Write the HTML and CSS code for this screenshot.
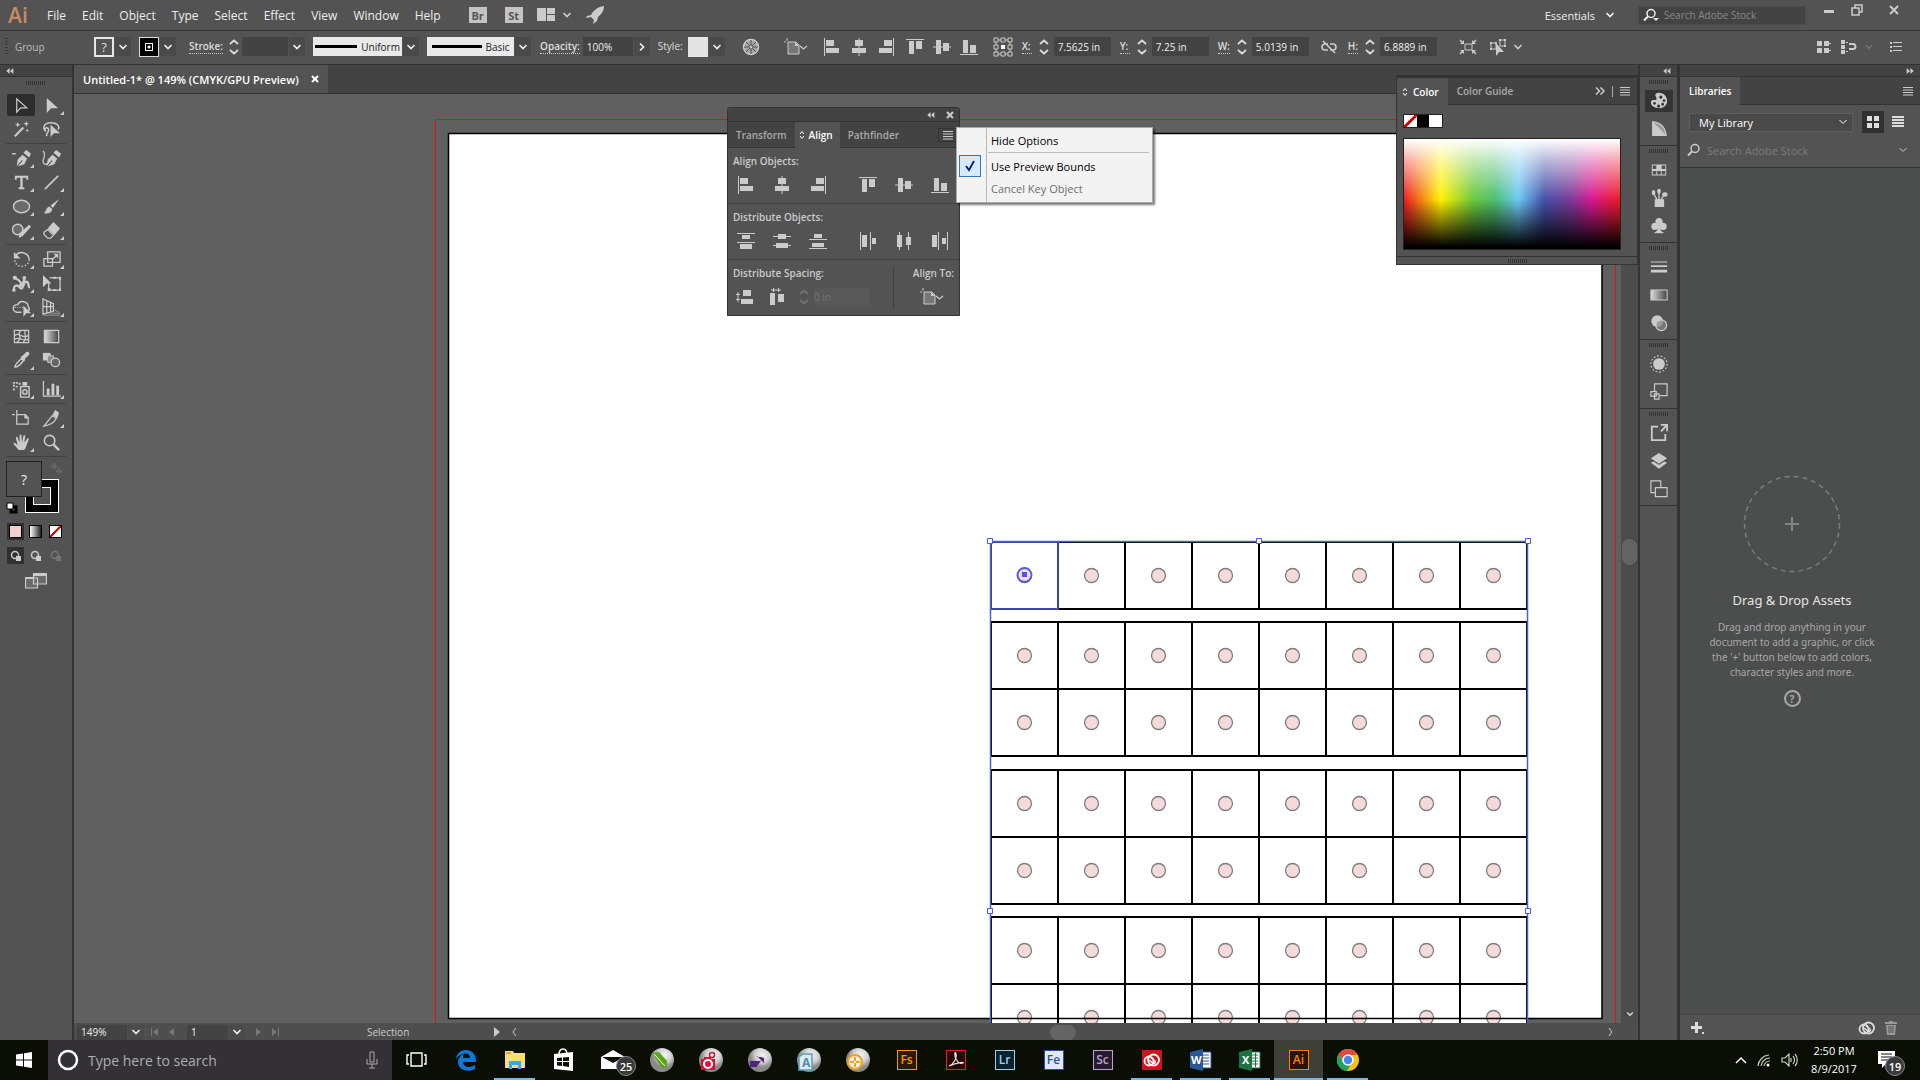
FILE: index.html
```html
<!DOCTYPE html>
<html lang="en">
<head>
<meta charset="utf-8">
<title>Untitled-1* @ 149% (CMYK/GPU Preview)</title>
<link rel="stylesheet" href="styles.css">
</head>
<body>
<svg class="sprite" aria-hidden="true">
  <defs>
    <linearGradient id="fade"><stop offset="0" stop-color="#ddd"/><stop offset="1" stop-color="#444"/></linearGradient>
    <symbol id="chev" viewBox="0 0 10 10"><path d="M1.500 3 5 6.500 8.500 3" fill="none" stroke="currentColor" stroke-width="1.700"/></symbol>
    <symbol id="chev-thin" viewBox="0 0 10 10"><path d="M1.500 3 5 6.500 8.500 3" fill="none" stroke="currentColor"/></symbol>
    <symbol id="chev-r" viewBox="0 0 10 10"><path d="M3 1.500 6.500 5 3 8.500" fill="none" stroke="currentColor" stroke-width="1.700"/></symbol>
    <symbol id="step" viewBox="0 0 12 18"><path d="M2 6 6 2.500 10 6M2 12 6 15.500 10 12" fill="none" stroke="currentColor" stroke-width="1.700"/></symbol>
    <symbol id="tiny-step" viewBox="0 0 6 10"><path d="M1 4 3 1.500 5 4M1 6 3 8.500 5 6" fill="none" stroke="currentColor"/></symbol>
    <symbol id="dbl-l" viewBox="0 0 10 8"><path d="M4.500 0v8L0 4ZM9.500 0v8L5 4Z"/></symbol>
    <symbol id="dbl-r" viewBox="0 0 10 8"><path d="M.5 0v8L5 4ZM5.500 0v8L10 4Z"/></symbol>
    <symbol id="dbl-o" viewBox="0 0 10 8"><path d="M1 .5 4.500 4 1 7.500M5.500 .5 9 4 5.500 7.500" fill="none" stroke="currentColor" stroke-width="1.500"/></symbol>
    <symbol id="burger" viewBox="0 0 10 10"><path d="M0 1h10v1H0zM0 3.500h10v1H0zM0 6h10v1H0zM0 8.500h10v1H0z"/></symbol>
    <symbol id="x" viewBox="0 0 10 10"><path d="M2 2 8 8M8 2 2 8" stroke="currentColor" stroke-width="2"/></symbol>
    <symbol id="lens" viewBox="0 0 14 14"><circle cx="8" cy="5.500" r="4" fill="none" stroke="currentColor" stroke-width="1.500"/><path d="M5 8.500 1 12.500" stroke="currentColor" stroke-width="2"/></symbol>

    <symbol id="al-l" viewBox="0 0 18 18"><path d="M1 0h1v18H1zM3 2h8v6H3zM3 10h13v5H3z"/></symbol>
    <symbol id="al-c" viewBox="0 0 18 18"><path d="M8.500 0h1v18h-1zM5 2h8v6H5zM2 10h14v5H2z"/></symbol>
    <symbol id="al-r" viewBox="0 0 18 18"><path d="M16 0h1v18h-1zM7 2h8v6H7zM2 10h13v5H2z"/></symbol>
    <symbol id="al-t" viewBox="0 0 18 18"><path d="M0 1h18v1H0zM3 3h5v13H3zM10 3h6v8h-6z"/></symbol>
    <symbol id="al-m" viewBox="0 0 18 18"><path d="M0 8.500h18v1H0zM3 2h5v14H3zM10 5h6v8h-6z"/></symbol>
    <symbol id="al-b" viewBox="0 0 18 18"><path d="M0 16h18v1H0zM3 2h5v13H3zM10 7h6v8h-6z"/></symbol>
    <symbol id="di-t" viewBox="0 0 18 18"><path d="M0 1h18v1H0zM5 3h8v4H5zM0 10h18v1H0zM3 12h12v5H3z"/></symbol>
    <symbol id="di-m" viewBox="0 0 18 18"><path d="M0 4h18v1H0zM5 2h8v5H5zM0 13h18v1H0zM3 11h12v5H3z"/></symbol>
    <symbol id="di-b" viewBox="0 0 18 18"><path d="M0 7h18v1H0zM5 2h8v4H5zM0 16h18v1H0zM3 11h12v4H3z"/></symbol>
    <symbol id="di-l" viewBox="0 0 18 18"><path d="M1 0h1v18H1zM3 3h5v12H3zM11 0h1v18h-1zM13 6h4v6h-4z"/></symbol>
    <symbol id="di-c" viewBox="0 0 18 18"><path d="M4 0h1v18H4zM2 3h5v12H2zM13 0h1v18h-1zM11 5h5v8h-5z"/></symbol>
    <symbol id="di-r" viewBox="0 0 18 18"><path d="M7 0h1v18H7zM1 3h5v12H1zM16 0h1v18h-1zM11 6h4v6h-4z"/></symbol>
    <symbol id="sp-v" viewBox="0 0 18 18"><path d="M7 2h8v6H7zM5 11h12v5H5zM0 6h4v1H0zM0 11h4v1H0zM1.500 4h1v10h-1z"/></symbol>
    <symbol id="sp-h" viewBox="0 0 18 18"><path d="M3 5h5v12H3zM11 6h6v8h-6zM6 0h1v4H6zM11 0h1v4h-1zM4 1.500h10v1H4z"/></symbol>
    <symbol id="doc" viewBox="0 0 26 18"><path d="M4 0v3M1 4h2" stroke="currentColor"/><path d="M5 4h8l3 3v9H5Z" fill="#777" stroke="currentColor"/><path d="M12 4v4h4Z"/><path d="M17 8 20.500 11 24 8" fill="none" stroke="currentColor" stroke-width="1.300"/></symbol>
    <symbol id="wheel" viewBox="0 0 18 18"><circle cx="9" cy="9" r="7.500" fill="#a5a5a5" stroke="currentColor" stroke-width="1.500"/><path d="M9 2v14M2 9h14M4 4l10 10M14 4 4 14" stroke="#555"/><circle cx="9" cy="9" r="2" fill="currentColor" stroke="#555"/></symbol>
    <symbol id="refpt" viewBox="0 0 20 20"><path d="M3 3h14v14H3Z" fill="none" stroke="currentColor"/><path d="M1 1h4v4H1zM8 1h4v4H8zM15 1h4v4h-4zM1 8h4v4H1zM15 8h4v4h-4zM1 15h4v4H1zM8 15h4v4H8zM15 15h4v4h-4z" fill="#535353" stroke="currentColor"/><path d="M8 8h4v4H8z" fill="#fff"/></symbol>
    <symbol id="unlink" viewBox="0 0 18 18"><path d="M8 6H5a3 3 0 0 0 0 6h3M10 6h3a3 3 0 0 1 0 6h-3M3 3 15 15" fill="none" stroke="currentColor" stroke-width="1.600"/></symbol>
    <symbol id="isolate" viewBox="0 0 18 18"><path d="M6 6h7v6H6Z" fill="none" stroke="currentColor"/><path d="m1 2 3 3M17 2l-3 3M1 16l3-3M17 16l-3-3" stroke="currentColor" stroke-width="1.500"/><path d="M5 2v4H1zM13 2v4h4zM5 16v-4H1zM13 16v-4h4z"/></symbol>
    <symbol id="simsel" viewBox="0 0 18 18"><path d="M2 5h5v6H2ZM11 2h5v6h-5Z" fill="none" stroke="currentColor"/><path d="M1 4h2v2H1zM6 4h2v2H6zM1 10h2v2H1zM10 1h2v2h-2zM15 1h2v2h-2zM15 7h2v2h-2zM7 5v13l3-4h5Z"/></symbol>
    <symbol id="four" viewBox="0 0 14 14"><path d="M0 1h5v5H0zM7 1h5v5H7zM0 8h5v5H0zM7 8h5v5H7zM12 3h2v1h-2zM12 10h2v1h-2z"/></symbol>
    <symbol id="snap" viewBox="0 0 16 14"><path d="M0 0h4v4H0zM0 5h4v4H0zM0 10h4v4H0zM5 2h2v1H5zM5 11h2v1H5z"/><path d="M8 4h4a2.500 2.500 0 0 1 0 5H8" fill="none" stroke="currentColor" stroke-width="2"/></symbol>
    <symbol id="list" viewBox="0 0 12 12"><path d="M0 1h2v2H0zM0 5h2v2H0zM0 9h2v2H0zM3 1h9v1H3zM3 5h9v1H3zM3 9h9v1H3z"/></symbol>
    <symbol id="arrange" viewBox="0 0 18 14"><path d="M0 0h9v13H0zM10 0h8v6h-8zM10 7h8v6h-8z"/></symbol>
    <symbol id="rocket" viewBox="0 0 20 18"><path d="M18 0C11 1 7 5 5 9L1 10 0 12l5-1 3 3-1 4 4-3 1-4c4-3 6-7 6-11Z"/></symbol>

    <symbol id="t-sel" viewBox="0 0 20 20"><path d="M5 3v14l4-4.500h6.500Z" fill="none" stroke="currentColor" stroke-width="1.300"/></symbol>
    <symbol id="t-dir" viewBox="0 0 20 20"><path d="M5 2v16l4.500-5H17Z"/></symbol>
    <symbol id="t-wand" viewBox="0 0 20 20"><path d="M3 17 12 8" stroke="currentColor" stroke-width="2.200"/><path d="m6 2 .8 2.200L9 5l-2.200.8L6 8l-.8-2.200L3 5l2.200-.8ZM15 1l.8 2.200L18 4l-2.200.8L15 7l-.8-2.200L12 4l2.200-.8ZM16 9l.5 1.500 1.500.5-1.500.5L16 13l-.5-1.500L14 11l1.500-.5Z"/></symbol>
    <symbol id="t-lasso" viewBox="0 0 20 20"><path d="M4 12C0 9 2 3 9 3c7 0 10 3 8 7M4 12a2 2 0 1 1 3-2c0 4-3 3-2 7" fill="none" stroke="currentColor" stroke-width="1.600"/><path d="M9 5v13l3.500-4H19Z"/></symbol>
    <symbol id="nib" viewBox="0 0 20 20"><path d="M5 18 6 11l5-5 5 4-3 6-7 2.500 5-6-.5-1ZM12 4l3-3 5 4-2 4Z"/></symbol>
    <symbol id="t-pen" viewBox="0 0 20 20"><use href="#nib"/><path d="M-1 5h5" stroke="currentColor" stroke-width="1.500"/></symbol>
    <symbol id="t-curve" viewBox="0 0 20 20"><use href="#nib"/><path d="M1 2c4 4 0 8 0 11s3 4 5 2" fill="none" stroke="currentColor" stroke-width="1.300"/></symbol>
    <symbol id="t-type" viewBox="0 0 20 20"><path d="M3 3h14v4h-2V5h-3.800v10H13v2H7v-2h1.800V5H5v2H3Z"/></symbol>
    <symbol id="t-line" viewBox="0 0 20 20"><path d="M3 17 17 3" stroke="currentColor" stroke-width="1.800"/></symbol>
    <symbol id="t-oval" viewBox="0 0 20 20"><ellipse cx="10" cy="10" rx="8.500" ry="6.500" fill="#6b6b6b" stroke="currentColor" stroke-width="1.500"/></symbol>
    <symbol id="t-brush" viewBox="0 0 20 20"><path d="M18 2 9 9l2.500 2.500ZM8 10l3 3c-1 4-5 5-9 4 2-1 2-6 6-7Z"/></symbol>
    <symbol id="t-shaper" viewBox="0 0 20 20"><circle cx="6" cy="9" r="5.500" fill="#6b6b6b" stroke="currentColor" stroke-width="1.500"/><path d="m7 18 1-5L18 4l2 2-9 10Z"/></symbol>
    <symbol id="t-erase" viewBox="0 0 20 20"><path d="m6 8 6-7 7 7-6 7Z"/><path d="m6 9 6 6-3 3H6l-4-4v-2Z" fill="none" stroke="currentColor" stroke-width="1.300"/></symbol>
    <symbol id="t-rot" viewBox="0 0 20 20"><path d="M4 6c4-6 14-3 14 4" fill="none" stroke="currentColor" stroke-width="1.600"/><path d="M18 10c0 9-14 10-15 1" fill="none" stroke="currentColor" stroke-width="1.500" stroke-dasharray="1.500 2"/><path d="M2 2v7h7Z"/></symbol>
    <symbol id="t-scale" viewBox="0 0 20 20"><path d="M6 2h13v11H6ZM2 9h9v8H2Z" fill="none" stroke="currentColor" stroke-width="1.400"/><path d="m11 10 4-4" stroke="currentColor" stroke-width="1.400"/><path d="M12 4h5v5Z"/></symbol>
    <symbol id="t-warp" viewBox="0 0 20 20"><path d="M2 17C2 10 6 12 8 14c4 5 4-7 7-6 4 1 1 6 4 6M4 5c6 2 5 5 6 8M13 5c-1 6-3 6-6 8" fill="none" stroke="currentColor" stroke-width="2.400"/><circle cx="3" cy="4" r="2.200"/><circle cx="13" cy="4" r="2"/><circle cx="2" cy="17" r="1.800"/></symbol>
    <symbol id="t-free" viewBox="0 0 20 20"><path d="M8 4h11v13H7V9" fill="none" stroke="currentColor" stroke-width="1.300"/><path d="M1 1v13l4-4h5Z"/><path d="M18 3h3v3h-3zM18 15h3v3h-3zM6 15h3v3H6zM12 3h3v2h-3zM12 16h3v2h-3z"/></symbol>
    <symbol id="t-shape" viewBox="0 0 20 20"><path d="M10 15H5c-5-1-5-8 1-8 2-5 11-4 11 2 2 2 1 4 0 5" fill="none" stroke="currentColor" stroke-width="1.500"/><path d="M3 10h9" stroke="currentColor" stroke-dasharray="1 1.500"/><path d="M12 8v12l3-4h5Z"/></symbol>
    <symbol id="t-persp" viewBox="0 0 20 20"><path d="M1 1v16l11-3V6ZM1 9h11M5 3v13M9 5v10" fill="none" stroke="currentColor" stroke-width="1.300"/><path d="M1 18h18M8 16h11M12 12l6 3" stroke="#999"/></symbol>
    <symbol id="t-mesh" viewBox="0 0 20 20"><path d="M2.500 3.500h15v13h-15Z" fill="none" stroke="currentColor" stroke-width="1.300"/><path d="M3 9c5-5 8 5 14 0M5 16c8-5-1-8 4-12M12 16c5-6 0-8 2-12M3 13c4-4 8 3 14 0" fill="none" stroke="currentColor" stroke-width="1.300"/></symbol>
    <symbol id="t-grad" viewBox="0 0 20 20"><path d="M2.500 3.500h15v13h-15Z" fill="url(#fade)" stroke="currentColor" stroke-width="1.300"/></symbol>
    <symbol id="t-drop" viewBox="0 0 20 20"><path d="M3 17c0-3 5-7 7-9l2 2c-2 3-6 7-9 7Z" fill="none" stroke="currentColor" stroke-width="1.500"/><path d="m9 6 2-1 4-4c3-1 4 2 3 3l-4 4-1 3Z"/></symbol>
    <symbol id="t-blend" viewBox="0 0 20 20"><path d="M1 2h8v8H1z"/><path d="M6 5h6v7H6Z" fill="#888" stroke="currentColor"/><circle cx="14" cy="12" r="4.500" fill="#666" stroke="currentColor" stroke-width="1.400"/></symbol>
    <symbol id="t-spray" viewBox="0 0 20 20"><path d="M9 7h9v11H9Z" fill="none" stroke="currentColor" stroke-width="1.500"/><circle cx="13.500" cy="12.500" r="2.300" fill="none" stroke="currentColor" stroke-width="1.500"/><path d="M11 2h5v4h-5zM1 2h2v2H1zM4 2h2v2H4zM7 3h2v2H7zM1 5h2v2H1zM4 6h2v2H4zM1 9h2v2H1z"/></symbol>
    <symbol id="t-graph" viewBox="0 0 20 20"><path d="M1.500 1v16H20" fill="none" stroke="currentColor" stroke-width="1.300"/><path d="M5 9h3v7H5zM10 4h3v12h-3zM15 6h3v10h-3z"/></symbol>
    <symbol id="t-art" viewBox="0 0 20 20"><path d="M5 1v4M0 6h3M5 6h9l3 3v7H5Z" fill="none" stroke="currentColor" stroke-width="1.300"/><path d="M13 5v5h5Z"/></symbol>
    <symbol id="t-slice" viewBox="0 0 20 20"><path d="M2 18 11 7l4 3c-2 4-7 7-13 8Z" fill="none" stroke="currentColor" stroke-width="1.400"/><path d="m11 6 3-5 4 3-2 6Z"/></symbol>
    <symbol id="t-hand" viewBox="0 0 20 20"><path d="m7 18-5-6c-1-2 1-2 2-1l2 2L4 5c0-1 2-2 2 0l2 5V3c0-2 2-2 2 0l.5 7L12 3c0-1 2-1 2 .5L13 10l3-4c1-1 2 0 1.500 1L15 14c-1 3-2 4-3 4Z"/></symbol>
    <symbol id="t-zoom" viewBox="0 0 20 20"><circle cx="8" cy="8" r="5.500" fill="none" stroke="currentColor" stroke-width="1.600"/><path d="m12 12 6 6" stroke="currentColor" stroke-width="2.500"/></symbol>
    <symbol id="draw-mode" viewBox="0 0 12 12"><circle cx="5" cy="5" r="3.500" fill="none" stroke="currentColor" stroke-width="1.500"/><path d="M6 6h5v5H6z"/></symbol>
    <symbol id="screen-mode" viewBox="0 0 22 16"><path d="M.5 5h12v10H.5ZM8.500 1h13v10h-13Z" fill="#6b6b6b" stroke="currentColor" stroke-width="1.200"/><path d="M0 4h8v2H0zM8 0h14v3H8z"/></symbol>

    <symbol id="d-pal" viewBox="0 0 20 20"><path fill-rule="evenodd" d="M8 1c7-1 11 4 11 9s-4 8-9 8S1 15 1 12s2-3 4-3 3-1 2-3-2-4 1-5Zm4 3a1.800 1.800 0 1 0 .1 0Zm3.500 4a1.600 1.600 0 1 0 .1 0ZM5 11a1.600 1.600 0 1 0 .1 0Zm4.500 3a1.700 1.700 0 1 0 .1 0Zm4.500-2a1.600 1.600 0 1 0 .1 0Z"/></symbol>
    <symbol id="d-guide" viewBox="0 0 20 20"><path d="M3 2c8 0 14 6 15 15H3Z" fill="#999" stroke="currentColor" stroke-width="1.300"/><path d="M3 2v15h15Z"/></symbol>
    <symbol id="d-sw" viewBox="0 0 20 20"><path fill-rule="evenodd" d="M2 4h16v12H2ZM3 5v4h4V5Zm10 0v4h4V5ZM3 11v4h4v-4Zm5 0v4h4v-4Zm5 0v4h4v-4Z"/></symbol>
    <symbol id="d-brush" viewBox="0 0 20 20"><path d="M6 12h9v8H6zM8 12 4 5M10 12V3M12 12l4-6" stroke="currentColor" stroke-width="1.500"/><ellipse cx="4" cy="4" rx="2" ry="3"/><ellipse cx="10" cy="2.500" rx="2" ry="3"/><ellipse cx="16.500" cy="6" rx="3" ry="2.500"/></symbol>
    <symbol id="d-club" viewBox="0 0 20 20"><circle cx="10" cy="5" r="4"/><circle cx="5.500" cy="10.500" r="4"/><circle cx="14.500" cy="10.500" r="4"/><path d="M9 8h2c0 6 1 8 4 9v1H5v-1c3-1 4-3 4-9Z"/></symbol>
    <symbol id="d-stroke" viewBox="0 0 20 20"><path d="M1 4h18v1H1zM1 8h18v2H1zM1 13h18v3H1z"/></symbol>
    <symbol id="d-grad" viewBox="0 0 20 20"><path d="M1 4.500h18v11H1Z" fill="url(#fade)" stroke="currentColor" stroke-width="1.200"/></symbol>
    <symbol id="d-trans" viewBox="0 0 20 20"><circle cx="8" cy="8" r="6.500"/><circle cx="12.500" cy="12.500" r="6" fill="#888" fill-opacity=".7" stroke="currentColor" stroke-width="1.300"/></symbol>
    <symbol id="d-app" viewBox="0 0 20 20"><circle cx="10" cy="10" r="6.500"/><circle cx="10" cy="10" r="9" fill="none" stroke="currentColor" stroke-width="1.200" stroke-dasharray="2 2"/></symbol>
    <symbol id="d-style" viewBox="0 0 20 20"><path d="M5 9V1h14v13h-8M1 9.500h6v5H1ZM5 12h5v6H5Z" fill="none" stroke="currentColor" stroke-width="1.300"/></symbol>
    <symbol id="d-export" viewBox="0 0 20 20"><path d="M9 3H2v15h15v-7" fill="none" stroke="currentColor" stroke-width="2"/><path d="M12 0h8v8h-2V3.500L13 9 11.500 7.500l5-5.500H12Z"/></symbol>
    <symbol id="d-layer" viewBox="0 0 20 20"><path d="m10 1 9 6-9 6-9-6ZM1 12l3-1.500 6 4 6-4 3 1.500-9 6.500Z"/></symbol>
    <symbol id="d-art" viewBox="0 0 20 20"><path d="M6 14H1V1h11v7M6 8.500h13v10H6Z" fill="none" stroke="currentColor" stroke-width="1.300"/></symbol>
    <symbol id="cc" viewBox="0 0 18 14"><circle cx="6" cy="8" r="4.500" fill="none" stroke="currentColor" stroke-width="1.800"/><circle cx="10.500" cy="7" r="5.500" fill="none" stroke="currentColor" stroke-width="1.800"/><path d="m6 7 4 3c2 1 3-1 2-2L8 5" fill="none" stroke="currentColor" stroke-width="1.500"/></symbol>
    <radialGradient id="ball" cx=".6" cy=".3"><stop offset="0" stop-color="#f4f4f4"/><stop offset=".6" stop-color="#d0d0d0"/><stop offset="1" stop-color="#8a8a8a"/></radialGradient>
    <g id="row8">
      <path d="M0 0H536V67H0ZM67 0V67M134 0V67M201 0V67M268 0V67M335 0V67M402 0V67M469 0V67" fill="none" stroke="#000" stroke-width="2"/>
      <g fill="#f4dada" stroke="#7d7d7d" stroke-width="1.300"><circle cx="33.500" cy="33.500" r="7"/><circle cx="100.500" cy="33.500" r="7"/><circle cx="167.500" cy="33.500" r="7"/><circle cx="234.500" cy="33.500" r="7"/><circle cx="301.500" cy="33.500" r="7"/><circle cx="368.500" cy="33.500" r="7"/><circle cx="435.500" cy="33.500" r="7"/><circle cx="502.500" cy="33.500" r="7"/></g>
    </g>
  </defs>
</svg>

<header class="menubar">
  <span class="logo">Ai</span>
  <nav class="menus">
    <button>File</button><button>Edit</button><button>Object</button><button>Type</button><button>Select</button><button>Effect</button><button>View</button><button>Window</button><button>Help</button>
  </nav>
  <div class="launch">
    <button class="badge-app">Br</button><button class="badge-app">St</button>
    <button class="arr" aria-label="Arrange documents"><svg width="18" height="14"><use href="#arrange"/></svg><svg width="10" height="10"><use href="#chev"/></svg></button>
    <button aria-label="GPU performance"><svg width="20" height="18"><use href="#rocket"/></svg></button>
  </div>
  <div class="window-side">
    <button class="essentials">Essentials <svg width="10" height="10"><use href="#chev"/></svg></button>
    <label class="stock"><svg width="16" height="14"><use href="#lens" width="14" height="14"/><path d="M10 10h6l-3 3Z"/></svg><input type="search" aria-label="Search Adobe Stock" placeholder="Search Adobe Stock"></label>
    <div class="win-buttons">
      <button aria-label="Minimize"><svg width="12" height="12"><path d="M1 6h10v3H1z"/></svg></button>
      <button aria-label="Restore"><svg width="12" height="12"><path d="M4 4V1h7v7H8M1 4h7v7H1Z" fill="none" stroke="currentColor" stroke-width="1.500"/></svg></button>
      <button class="close" aria-label="Close"><svg width="12" height="12"><path d="m2 2 8 8M10 2 2 10" stroke="currentColor" stroke-width="2"/></svg></button>
    </div>
  </div>
</header>

<section class="control">
  <span class="grip-v"></span><span class="kind">Group</span>
  <button class="swatch unknown">?</button><button class="drop" aria-label="Fill"><svg width="10" height="10"><use href="#chev"/></svg></button>
  <button class="swatch black" aria-label="Stroke colour"><i></i></button><button class="drop" aria-label="Stroke swatches"><svg width="10" height="10"><use href="#chev"/></svg></button>
  <label class="lab stroke-lab" for="stroke">Stroke:</label>
  <svg class="stepper" width="12" height="18"><use href="#step"/></svg><input id="stroke" class="field short"><button class="drop" aria-label="Stroke weights"><svg width="10" height="10"><use href="#chev"/></svg></button>
  <button class="profile"><i></i>Uniform</button><button class="drop" aria-label="Width profile"><svg width="10" height="10"><use href="#chev"/></svg></button>
  <button class="profile basic"><i></i>Basic</button><button class="drop" aria-label="Brush"><svg width="10" height="10"><use href="#chev"/></svg></button>
  <label class="lab opacity-lab" for="opacity">Opacity:</label><input id="opacity" class="field mid" value="100%"><button class="drop" aria-label="Opacity slider"><svg width="10" height="10"><use href="#chev-r"/></svg></button>
  <span class="lab plain">Style:</span><button class="swatch style" aria-label="Graphic style"></button><button class="drop" aria-label="Graphic styles"><svg width="10" height="10"><use href="#chev"/></svg></button>
  <button class="ic wheel" aria-label="Recolor"><svg width="18" height="18"><use href="#wheel"/></svg></button>
  <button class="ic align-to" aria-label="Align to"><svg width="26" height="18"><use href="#doc"/></svg></button>
  <div class="aligns">
    <button aria-label="Align left"><svg width="18" height="18"><use href="#al-l"/></svg></button><button aria-label="Align center"><svg width="18" height="18"><use href="#al-c"/></svg></button><button aria-label="Align right"><svg width="18" height="18"><use href="#al-r"/></svg></button><button class="second" aria-label="Align top"><svg width="18" height="18"><use href="#al-t"/></svg></button><button aria-label="Align middle"><svg width="18" height="18"><use href="#al-m"/></svg></button><button aria-label="Align bottom"><svg width="18" height="18"><use href="#al-b"/></svg></button>
  </div>
  <svg class="ref" width="20" height="20"><use href="#refpt"/></svg>
  <div class="coord"><label class="lab" for="cx">X:</label><svg width="12" height="18"><use href="#step"/></svg><input id="cx" class="field" value="7.5625 in"></div>
  <div class="coord"><label class="lab" for="cy">Y:</label><svg width="12" height="18"><use href="#step"/></svg><input id="cy" class="field" value="7.25 in"></div>
  <div class="coord"><label class="lab" for="cw">W:</label><svg width="12" height="18"><use href="#step"/></svg><input id="cw" class="field" value="5.0139 in"></div>
  <button class="ic link" aria-label="Constrain proportions"><svg width="18" height="18"><use href="#unlink"/></svg></button>
  <div class="coord"><label class="lab" for="ch">H:</label><svg width="12" height="18"><use href="#step"/></svg><input id="ch" class="field" value="6.8889 in"></div>
  <button class="ic isolate" aria-label="Isolate"><svg width="18" height="18"><use href="#isolate"/></svg></button>
  <button class="ic sim" aria-label="Select similar"><svg width="18" height="18"><use href="#simsel"/></svg><svg width="10" height="10"><use href="#chev"/></svg></button>
  <div class="control-end">
    <svg width="14" height="14"><use href="#four"/></svg>
    <span class="snap"><svg width="16" height="14"><use href="#snap"/></svg><svg class="dim" width="8" height="8"><use href="#chev"/></svg></span>
    <svg width="12" height="12"><use href="#list"/></svg>
  </div>
</section>

<main class="workspace">
  <aside class="tools">
    <div class="strip"><svg width="10" height="6"><use href="#dbl-l"/></svg></div>
    <div class="grip"></div>
    <div class="tool-grid">
      <button class="on" aria-label="Selection"><svg><use href="#t-sel"/></svg></button><button class="more" aria-label="Direct selection"><svg><use href="#t-dir"/></svg></button>
      <button aria-label="Magic wand"><svg><use href="#t-wand"/></svg></button><button aria-label="Lasso"><svg><use href="#t-lasso"/></svg></button>
    </div>
    <div class="tool-grid">
      <button class="more" aria-label="Pen"><svg><use href="#t-pen"/></svg></button><button aria-label="Curvature"><svg><use href="#t-curve"/></svg></button>
      <button class="more" aria-label="Type"><svg><use href="#t-type"/></svg></button><button class="more" aria-label="Line"><svg><use href="#t-line"/></svg></button>
      <button class="more" aria-label="Ellipse"><svg><use href="#t-oval"/></svg></button><button class="more" aria-label="Paintbrush"><svg><use href="#t-brush"/></svg></button>
      <button class="more" aria-label="Shaper"><svg><use href="#t-shaper"/></svg></button><button class="more" aria-label="Eraser"><svg><use href="#t-erase"/></svg></button>
    </div>
    <div class="tool-grid">
      <button class="more" aria-label="Rotate"><svg><use href="#t-rot"/></svg></button><button class="more" aria-label="Scale"><svg><use href="#t-scale"/></svg></button>
      <button class="more" aria-label="Width"><svg><use href="#t-warp"/></svg></button><button aria-label="Free transform"><svg><use href="#t-free"/></svg></button>
      <button class="more" aria-label="Shape builder"><svg><use href="#t-shape"/></svg></button><button class="more" aria-label="Perspective grid"><svg><use href="#t-persp"/></svg></button>
    </div>
    <div class="tool-grid">
      <button aria-label="Mesh"><svg><use href="#t-mesh"/></svg></button><button aria-label="Gradient"><svg><use href="#t-grad"/></svg></button>
      <button class="more" aria-label="Eyedropper"><svg><use href="#t-drop"/></svg></button><button aria-label="Blend"><svg><use href="#t-blend"/></svg></button>
    </div>
    <div class="tool-grid">
      <button class="more" aria-label="Symbol sprayer"><svg><use href="#t-spray"/></svg></button><button class="more" aria-label="Column graph"><svg><use href="#t-graph"/></svg></button>
    </div>
    <div class="tool-grid">
      <button aria-label="Artboard"><svg><use href="#t-art"/></svg></button><button class="more" aria-label="Slice"><svg><use href="#t-slice"/></svg></button>
      <button class="more" aria-label="Hand"><svg><use href="#t-hand"/></svg></button><button aria-label="Zoom"><svg><use href="#t-zoom"/></svg></button>
    </div>
    <div class="fill-stroke">
      <button class="stroke-box" aria-label="Stroke"><i></i></button>
      <button class="fill-box" aria-label="Fill">?</button>
      <svg class="swap" width="12" height="12"><path d="M3 4c5-1 6 2 6 6M1 4l4-3v6ZM6 9h6l-3 3Z" fill="none" stroke="#6e6e6e"/></svg>
      <svg class="default" width="12" height="12"><path d="M5 5h5v5H5Z" fill="none" stroke="#000" stroke-width="3"/><path d="M1 1h6v6H1Z" fill="#fff" stroke="#000"/></svg>
    </div>
    <div class="modes">
      <button class="on" aria-label="Color"><i class="pink"></i></button><button aria-label="Gradient"><i class="grad"></i></button><button aria-label="None"><i class="none"></i></button>
    </div>
    <div class="modes">
      <button class="on" aria-label="Draw normal"><svg width="12" height="12"><use href="#draw-mode"/></svg></button><button aria-label="Draw behind"><svg width="12" height="12"><use href="#draw-mode"/></svg></button><button class="dim" aria-label="Draw inside"><svg width="12" height="12"><use href="#draw-mode"/></svg></button>
    </div>
    <button class="screen" aria-label="Change screen mode"><svg width="22" height="16"><use href="#screen-mode"/></svg></button>
  </aside>

  <section class="document">
    <div class="tabbar"><div class="doc-tab">Untitled-1* @ 149% (CMYK/GPU Preview)<button aria-label="Close document"><svg width="10" height="10"><use href="#x"/></svg></button></div></div>
    <div class="view">
      <div class="canvas">
        <svg class="art" width="100%" height="100%" role="img" aria-label="Artboard with a grid of squares and circles">
          <g transform="translate(-74 -94)">
            <path d="M435.500 119.500H1615.500V1033H435.500Z" fill="none" stroke="#dc1414"/>
            <path d="M448.500 133.500H1602V1018.500H448.500Z" fill="#fff" stroke="#000" stroke-width="1.500"/>
            <path d="M991 984H1527V1030H991Z" fill="#fff"/>
            <use href="#row8" x="991" y="542"/><use href="#row8" x="991" y="622"/><use href="#row8" x="991" y="689"/><use href="#row8" x="991" y="770"/><use href="#row8" x="991" y="837"/><use href="#row8" x="991" y="917"/><use href="#row8" x="991" y="984"/>
            <path d="M991 1018.500H1527" stroke="#000" stroke-width="1.500"/>
            <path d="M990.500 1030V541.500H1527.500V1030M991 609V542H1058V609Z" fill="none" stroke="#4f5bd8" stroke-width="1.500"/>
            <circle cx="1024.500" cy="575" r="7" fill="#f4dada" stroke="#4f5bd8" stroke-width="1.800"/><path d="M1022 572h5v5h-5z" fill="#4a55ee"/>
            <path d="M987.500 538.500h5v5h-5zM1256.500 538.500h5v5h-5zM1525.500 538.500h5v5h-5zM987.500 908.500h5v5h-5zM1525.500 908.500h5v5h-5z" fill="#fff" stroke="#4a55ee"/>
          </g>
        </svg>
      </div>
      <div class="vscroll"><i></i><svg width="8" height="8"><use href="#chev"/></svg></div>
    </div>
    <footer class="status">
      <input class="field zoomf" aria-label="Zoom" value="149%"><button class="drop" aria-label="Zoom levels"><svg width="10" height="10"><use href="#chev"/></svg></button>
      <svg class="dim" width="26" height="10"><path d="M1 1h1v8H1zM8 1v8L3 5ZM24 1v8l-5-4Z"/></svg>
      <input class="field pagef" aria-label="Artboard number" value="1"><button class="drop page-drop" aria-label="Artboards"><svg width="10" height="10"><use href="#chev"/></svg></button>
      <svg class="dim" width="26" height="10"><path d="M1 1v8l5-4ZM17 1v8l5-4ZM23 1h1v8h-1z"/></svg>
      <span class="sel">Selection</span>
      <svg class="play" width="8" height="10"><path d="M1 0v10l6-5Z"/></svg>
      <div class="hscroll"><svg width="8" height="8"><path d="M5 0 2 4l3 4" fill="none" stroke="currentColor"/></svg><i></i><svg width="8" height="8"><path d="m2 0 3 4-3 4" fill="none" stroke="currentColor"/></svg></div>
    </footer>

    <section class="panel align">
      <div class="panel-bar"><svg width="10" height="6"><use href="#dbl-l"/></svg><svg width="10" height="10"><use href="#x"/></svg></div>
      <div class="tabs"><button>Transform</button><button class="on"><svg width="6" height="10"><use href="#tiny-step"/></svg>Align</button><button class="path">Pathfinder</button><button class="panel-menu" aria-label="Panel menu"><svg width="10" height="10"><use href="#burger"/></svg></button></div>
      <div class="sect"><h3>Align Objects:</h3><div class="six">
        <button aria-label="Left"><svg width="18" height="18"><use href="#al-l"/></svg></button><button aria-label="Center"><svg width="18" height="18"><use href="#al-c"/></svg></button><button aria-label="Right"><svg width="18" height="18"><use href="#al-r"/></svg></button><button aria-label="Top"><svg width="18" height="18"><use href="#al-t"/></svg></button><button aria-label="Middle"><svg width="18" height="18"><use href="#al-m"/></svg></button><button aria-label="Bottom"><svg width="18" height="18"><use href="#al-b"/></svg></button></div></div>
      <div class="sect"><h3>Distribute Objects:</h3><div class="six">
        <button aria-label="Top edges"><svg width="18" height="18"><use href="#di-t"/></svg></button><button aria-label="Vertical centers"><svg width="18" height="18"><use href="#di-m"/></svg></button><button aria-label="Bottom edges"><svg width="18" height="18"><use href="#di-b"/></svg></button><button aria-label="Left edges"><svg width="18" height="18"><use href="#di-l"/></svg></button><button aria-label="Horizontal centers"><svg width="18" height="18"><use href="#di-c"/></svg></button><button aria-label="Right edges"><svg width="18" height="18"><use href="#di-r"/></svg></button></div></div>
      <div class="sect last">
        <div class="spacing"><h3>Distribute Spacing:</h3><div class="space-row"><button aria-label="Vertical space"><svg width="18" height="18"><use href="#sp-v"/></svg></button><button aria-label="Horizontal space"><svg width="18" height="18"><use href="#sp-h"/></svg></button><span class="zero"><svg width="12" height="18"><use href="#step"/></svg><input aria-label="Spacing" value="0 in" disabled></span></div></div>
        <div class="to"><h3>Align To:</h3><button aria-label="Align to selection"><svg width="26" height="18"><use href="#doc"/></svg></button></div>
      </div>
    </section>

    <div class="popup" role="menu">
      <button role="menuitem">Hide Options</button>
      <hr>
      <button role="menuitemcheckbox" aria-checked="true"><span class="check"><svg width="12" height="12"><path d="m2 6 3 4 5-9" fill="none" stroke="#15157e" stroke-width="1.800"/></svg></span>Use Preview Bounds</button>
      <button role="menuitem" disabled>Cancel Key Object</button>
    </div>

    <section class="panel color">
      <div class="tabs"><button class="on"><svg width="6" height="10"><use href="#tiny-step"/></svg>Color</button><button>Color Guide</button><span class="tab-end"><svg width="10" height="8"><use href="#dbl-o"/></svg><i></i><svg width="10" height="10"><use href="#burger"/></svg></span></div>
      <div class="color-body"><div class="trio"><i class="none"></i><i class="blk"></i><i class="wht"></i></div><div class="spectrum"></div></div>
      <div class="color-foot"><div class="grip"></div></div>
    </section>
  </section>

  <aside class="dock">
    <div class="strip"><svg width="10" height="6"><use href="#dbl-l"/></svg></div>
    <div class="dock-group"><div class="grip"></div><button class="on" aria-label="Color"><svg><use href="#d-pal"/></svg></button><button aria-label="Color guide"><svg><use href="#d-guide"/></svg></button></div>
    <div class="dock-group"><div class="grip"></div><button aria-label="Swatches"><svg><use href="#d-sw"/></svg></button><button aria-label="Brushes"><svg><use href="#d-brush"/></svg></button><button aria-label="Symbols"><svg><use href="#d-club"/></svg></button></div>
    <div class="dock-group"><div class="grip"></div><button aria-label="Stroke"><svg><use href="#d-stroke"/></svg></button><button aria-label="Gradient"><svg><use href="#d-grad"/></svg></button><button aria-label="Transparency"><svg><use href="#d-trans"/></svg></button></div>
    <div class="dock-group"><div class="grip"></div><button aria-label="Appearance"><svg><use href="#d-app"/></svg></button><button aria-label="Graphic styles"><svg><use href="#d-style"/></svg></button></div>
    <div class="dock-group"><div class="grip"></div><button aria-label="Asset export"><svg><use href="#d-export"/></svg></button><button aria-label="Layers"><svg><use href="#d-layer"/></svg></button><button aria-label="Artboards"><svg><use href="#d-art"/></svg></button></div>
  </aside>

  <aside class="libs">
    <div class="strip end"><svg width="10" height="6"><use href="#dbl-r"/></svg></div>
    <div class="tabs"><button class="on">Libraries</button><span class="tab-end"><svg width="10" height="10"><use href="#burger"/></svg></span></div>
    <div class="lib-top">
      <div class="lib-row"><span class="pick"><select aria-label="Library"><option>My Library</option></select><svg width="10" height="10"><use href="#chev-thin"/></svg></span><button class="on" aria-label="Grid view"><svg width="12" height="12"><path d="M0 0h5v5H0zM7 0h5v5H7zM0 7h5v5H0zM7 7h5v5H7z"/></svg></button><button aria-label="List view"><svg width="12" height="12"><path d="M0 0h12v2H0zM0 3h12v2H0zM0 6h12v2H0zM0 9h12v2H0z"/></svg></button></div>
      <label class="lib-search"><svg width="14" height="14"><use href="#lens"/></svg><input type="search" aria-label="Search Adobe Stock in libraries" placeholder="Search Adobe Stock"><svg width="10" height="10"><use href="#chev-thin"/></svg></label>
    </div>
    <div class="lib-body">
      <svg width="98" height="98"><circle cx="49" cy="49" r="47.500" fill="none" stroke="#7c7c7c" stroke-width="1.500" stroke-dasharray="5 4"/><path d="M42 49h14M49 42v14" stroke="#858585" stroke-width="2"/></svg>
      <h2>Drag &amp; Drop Assets</h2>
      <p>Drag and drop anything in your<br>document to add a graphic, or click<br>the '+' button below to add colors,<br>character styles and more.</p>
      <button class="help" aria-label="Help">?</button>
    </div>
    <div class="lib-foot"><svg width="14" height="14"><path d="M5 1h3v4h4v3H8v4H5V8H1V5h4zM12 11h2v2h-2z"/></svg><span><svg width="18" height="14"><use href="#cc"/></svg><svg class="trash" width="12" height="14"><path d="M4 0h4v1h4v2H0V1h4zM1 4h10l-1 10H2Z"/><path d="M4 5v7M6 5v7M8 5v7" stroke="#535353"/></svg></span></div>
  </aside>
</main>

<footer class="taskbar">
  <button class="start" aria-label="Start"><svg width="16" height="16"><path d="M0 2.500 7 1.500V7.500H0ZM8 1.300 16 0V7.500H8ZM0 8.500H7V14.500L0 13.500ZM8 8.500H16V16L8 14.700Z"/></svg></button>
  <label class="cortana"><svg width="22" height="22"><circle cx="11" cy="11" r="9" fill="none" stroke="#fff" stroke-width="2.500"/></svg><input type="search" aria-label="Type here to search" placeholder="Type here to search"><svg width="12" height="18"><path d="M4 1h4v10H4ZM1 8v5h10V8M6 13v4M3 17h6" fill="none" stroke="#aaa"/></svg></label>
  <div class="apps">
    <button aria-label="Task view"><svg width="22" height="16"><path d="M5 1h11v13H5ZM3 3H1v9h2M18 3h2v9h-2" fill="none" stroke="#fff" stroke-width="1.400"/></svg></button>
    <button aria-label="Edge"><svg width="22" height="22"><path d="M1 10C2 3 7 1 11 1c6 0 10 4 10 12H8c0 3 3 5 6 5 2 0 4-1 6-2v4c-7 4-17 1-17-7 0-4 3-7 6-8-1 1-1 2-1 4h7C15 2 5 4 1 10Z" fill="#0f78d4"/></svg></button>
    <button class="run" aria-label="File Explorer"><svg width="22" height="22"><path d="M1 2h8l1 2h11v15H1Z" fill="#f8dc7e"/><path d="M2 3h5v2H2Z" fill="#e0a52c"/><path d="M5 12h12v8h-3v-4H8v4H5Z" fill="#36a7e8"/></svg></button>
    <button aria-label="Store"><svg width="22" height="24"><path d="M1 6 20 4V23L1 21Z" fill="#fff"/><path d="M6 7c0-8 8-8 8 0" fill="none" stroke="#fff" stroke-width="1.500"/><path d="M4 10l5-.5V13H4zM10 9.500 16 9v4h-6zM4 14h5v4l-5-.5zM10 14h6v5l-6-1z" fill="#0a0e05"/></svg></button>
    <button aria-label="Mail"><svg width="24" height="20"><path d="m0 7 12-7 12 7v12H0Z" fill="#fff"/><path d="m1 7 11 6 11-6" fill="#0a0e05"/></svg><b class="count">25</b></button>
    <button aria-label="CorelDRAW"><svg width="24" height="24"><circle cx="12" cy="12" r="12" fill="url(#ball)"/><path d="m2 5 7-1 8 9v6l-5 1Z" fill="#58a618"/><path d="m4 6 11 12" stroke="#fff"/></svg></button>
    <button aria-label="Corel Capture"><svg width="24" height="24"><circle cx="12" cy="12" r="12" fill="url(#ball)"/><path d="M2 11h3V9h7v2h4v11H2Z" fill="#ce1837"/><circle cx="9" cy="16" r="4" fill="#ce1837" stroke="#fff" stroke-width="2"/><circle cx="13" cy="7" r="2.500" fill="none" stroke="#ce1837" stroke-width="1.500"/></svg></button>
    <button aria-label="Corel Photo-Paint"><svg width="24" height="24"><circle cx="12" cy="12" r="12" fill="url(#ball)"/><path d="M2 13h7v6H2zM9 13V8l7 7v-5l-3-1H9ZM9 13h4l-4 5Z" fill="#522583"/></svg></button>
    <button aria-label="Corel Font Manager"><svg width="24" height="24"><circle cx="12" cy="12" r="12" fill="url(#ball)"/><path d="m2 9 4-3h9v16H2Z" fill="#dce9ef" stroke="#5a9fbc" stroke-width="1.500"/><text x="5" y="19" font-size="12" font-weight="700" fill="#4b8fae">A</text></svg></button>
    <button aria-label="Corel Connect"><svg width="24" height="24"><circle cx="12" cy="12" r="12" fill="url(#ball)"/><circle cx="9" cy="14" r="7" fill="#eee" stroke="#f0a51c" stroke-width="2"/><path d="M9 9v4M9 15v4M4 14h4M10 14h4" stroke="#f0a51c" stroke-width="2"/></svg></button>
    <button><span class="tile fs">Fs</span></button>
    <button aria-label="Acrobat"><span class="tile pdf"><svg width="16" height="16"><path d="M1 14C6 12 9 6 8 2S6 3 8 7s5 5 7 4-5-1-14 3Z" fill="none" stroke="#e8dcdc" stroke-width="1.200"/></svg></span></button>
    <button><span class="tile lr">Lr</span></button>
    <button><span class="tile fe">Fe</span></button>
    <button><span class="tile sc">Sc</span></button>
    <button class="run" aria-label="Creative Cloud"><span class="tile ccl"><svg width="18" height="14"><use href="#cc"/></svg></span></button>
    <button class="run" aria-label="Word"><svg width="22" height="22"><path d="M12 3h9v16h-9Z" fill="#fff" stroke="#2b579a"/><path d="M12 6h7M12 9h7M12 12h7M12 15h7" stroke="#2b579a"/><path d="M0 3 13 0v22L0 19Z" fill="#2b579a"/><text x="1" y="15" font-size="11" font-weight="700" fill="#fff">W</text></svg></button>
    <button class="run" aria-label="Excel"><svg width="22" height="22"><path d="M12 3h9v16h-9Z" fill="#fff" stroke="#1e7145"/><path d="M12 6h7M12 9h7M12 12h7M12 15h7M16.500 4v14" stroke="#1e7145"/><path d="M0 3 13 0v22L0 19Z" fill="#1e7145"/><text x="3" y="15" font-size="11" font-weight="700" fill="#fff">X</text></svg></button>
    <button class="run current"><span class="tile ai">Ai</span></button>
    <button class="run" aria-label="Chrome"><svg width="22" height="22"><circle cx="11" cy="11" r="11" fill="#fbc116"/><path d="M1.500 5.500A11 11 0 0 1 20.500 5.500L11 6.500 8 15Z" fill="#dd4b3e"/><path d="M1.500 5.500A11 11 0 0 0 10 22L15 13 7 14Z" fill="#1da362"/><circle cx="11" cy="11" r="5" fill="#4285f4" stroke="#fff" stroke-width="1.500"/></svg></button>
  </div>
  <div class="tray">
    <svg width="12" height="8"><path d="m1 7 5-5 5 5" fill="none" stroke="#fff" stroke-width="1.500"/></svg>
    <svg width="14" height="14"><path d="M1 13A12 12 0 0 1 12 2M4 13a9 9 0 0 1 9-8M7 13a6 6 0 0 1 6-5" fill="none" stroke="#ccc" stroke-width="1.200"/><circle cx="11" cy="12" r="1.500" fill="#fff"/></svg>
    <svg width="18" height="14"><path d="M1 5h3l4-4v12L4 9H1ZM10 5v4M12 3c2 2 2 6 0 8M14 1c3 3 3 9 0 12" fill="none" stroke="#ccc" stroke-width="1.200"/></svg>
    <time>2:50 PM<br>8/9/2017</time>
    <button class="notes" aria-label="Notifications"><svg width="18" height="18"><path d="M0 0h17v13H8l-4 4v-4H0Z" fill="#fff"/><path d="M3 3h11M3 6h11M3 9h7" stroke="#0a0e05"/></svg><b class="count">19</b></button>
  </div>
</footer>
</body>
</html>
```
FILE: styles.css
```css
:root {
  --panel: #535353;
  --dark: #434343;
  --line: #333;
  --icon: #cbcbcb;
}
* { box-sizing: border-box; }
body {
  margin: 0;
  height: 100vh;
  display: flex;
  flex-direction: column;
  overflow: hidden;
  background: var(--panel);
  color: #ddd;
  font-family: "Open Sans", "Noto Sans", sans-serif;
  font-size: 10px;
}
svg { display: block; flex: none; fill: currentColor; }
.sprite { position: absolute; width: 0; height: 0; }
button, input, select { margin: 0; border: 0; padding: 0; background: none; color: inherit; font: inherit; }
button { display: flex; align-items: center; justify-content: center; flex: none; }
input { min-width: 0; outline: 0; }
h2, h3, p { margin: 0; }
.dim { color: #757575; }

/* menu bar */
.menubar { display: flex; align-items: center; height: 31px; flex: none; border-bottom: 1px solid var(--line); font-size: 12px; color: #eee; }
.logo { width: 47px; padding-left: 8px; font-size: 21px; line-height: 28px; font-weight: 600; color: #c88a62; }
.menus { display: flex; gap: 16px; }
.launch { display: flex; align-items: center; gap: 14px; margin-left: 28px; color: var(--icon); }
.badge-app { width: 18px; height: 16px; background: #c4c4c4; color: #555; font-size: 11px; font-weight: 700; }
.badge-app + .badge-app { margin-left: 4px; }
.arr { gap: 7px; }
.window-side { display: flex; align-items: center; margin-left: auto; height: 30px; }
.essentials { gap: 10px; font-size: 11px; margin-right: 23px; }
.stock { display: flex; align-items: center; gap: 5px; width: 168px; height: 19px; padding: 0 4px; background: var(--dark); border: 1px solid #4c4c4c; font-size: 10px; }
.stock input, .lib-search input { flex: 1; }
.stock input::placeholder { color: #888; opacity: 1; }
.win-buttons { display: flex; gap: 16px; margin: 0 20px 10px 17px; color: var(--icon); }
.win-buttons .close { margin-left: 9px; }

/* control bar */
.control { display: flex; align-items: center; height: 34px; flex: none; padding: 0 18px 2px 5px; border-bottom: 1px solid var(--line); white-space: nowrap; }
.grip-v { width: 3px; height: 18px; background: repeating-linear-gradient(#3a3a3a 0 1px, transparent 1px 3px); }
.kind { width: 79px; margin-left: 7px; color: #bbb; }
.drop { width: 16px; height: 19px; margin: 0 8px 0 1px; background: #4a4a4a; color: #eee; }
.swatch { width: 20px; height: 20px; }
.unknown { border: 2px solid #e6e6e6; font-size: 13px; }
.black { background: #000; border: 1px solid #ddd; }
.black i { width: 8px; height: 8px; border: 1px solid #fff; background: radial-gradient(#fff 0 1px, #000 2px); }
.style { background: #e4e4e4; margin-left: 5px; }
.lab { font-weight: 600; border-bottom: 1px dotted #ccc; line-height: 13px; }
.stroke-lab { margin: 0 5px 0 5px; }
.opacity-lab { margin: 0 3px 0 1px; }
.plain { border: 0; font-weight: 400; }
.field { width: 57px; height: 19px; padding: 0 4px; background: var(--dark); color: #f0f0f0; }
.short { width: 46px; }
.mid { width: 50px; }
.profile { width: 89px; height: 19px; background: #e9e9e9; color: #222; gap: 4px; }
.profile i { width: 42px; height: 3px; background: #000; }
.basic { width: 87px; }
.basic i { width: 50px; }
.stepper { margin-right: 2px; }
.ic { color: var(--icon); }
.wheel { margin-left: 9px; }
.align-to { margin-left: 23px; }
.isolate { margin-left: 13px; }
.aligns { display: flex; gap: 9px; margin-left: 14px; color: var(--icon); }
.aligns .second { margin-left: 2px; }
.ref { margin: 0 9px 0 15px; color: var(--icon); }
.coord { display: flex; align-items: center; gap: 6px; margin-right: 9px; }
.coord .field { margin-left: -2px; }
.coord .lab { min-width: 10px; }
.link { margin: 0 10px 0 2px; }
.sim { gap: 6px; margin-left: 12px; }
.control-end { display: flex; align-items: center; gap: 10px; margin-left: auto; color: var(--icon); }
.snap { display: flex; align-items: center; gap: 8px; margin-right: 7px; }

/* workspace */
.workspace { flex: 1; min-height: 0; display: flex; }
.strip { height: 12px; display: flex; align-items: center; padding: 0 5px; background: var(--dark); color: var(--icon); border-bottom: 1px solid var(--line); }
.grip { width: 19px; height: 4px; margin: 4px auto; background: repeating-linear-gradient(90deg, #333 0 1px, transparent 1px 2px); }

.tools { width: 74px; flex: none; border-right: 2px solid var(--line); color: var(--icon); }
.tools > .grip { margin: 4px 26px 8px; }
.tool-grid { display: grid; grid-template-columns: 30px 30px; grid-auto-rows: 24px; padding: 0 6px; position: relative; margin-bottom: 5px; }
.tool-grid::after { content: ""; position: absolute; left: 6px; right: 6px; bottom: -3px; height: 1px; background: #414141; }
.tool-grid button { position: relative; }
.tool-grid svg { width: 19px; height: 19px; overflow: visible; }
.tool-grid .on { background: #2d2d2d; border-radius: 2px; margin: 1px; }
.more::after { content: ""; position: absolute; right: 2px; bottom: 2px; border: 2px solid; border-color: transparent var(--icon) var(--icon) transparent; }
.fill-stroke { position: relative; height: 64px; }
.fill-box, .stroke-box, .swap, .default { position: absolute; }
.fill-box { left: 6px; top: 2px; width: 36px; height: 36px; background: var(--panel); border: 1px solid #222; font-size: 14px; color: #eee; }
.stroke-box { left: 25px; top: 20px; width: 34px; height: 34px; background: #000; border: 1px solid #fff; }
.stroke-box i { width: 18px; height: 18px; background: var(--panel); border: 1px solid #fff; }
.swap { left: 50px; top: 3px; }
.default { left: 6px; top: 43px; }
.modes { display: flex; gap: 3px; padding: 0 7px; margin-bottom: 7px; }
.modes button { width: 17px; height: 17px; }
.modes .on { background: #303030; }
.modes i { width: 13px; height: 13px; border: 1px solid #000; }
.pink { background: #f2cfcb; }
.grad { background: linear-gradient(90deg, #fff, #222); }
.modes .none, .trio .none { background: linear-gradient(to bottom right, #fff 42%, #e00 42% 58%, #fff 58%); }
.modes + .screen { margin: 9px 0 0 25px; }

.document { position: relative; flex: 1; min-width: 0; display: flex; flex-direction: column; border-right: 2px solid var(--line); }
.tabbar { height: 29px; flex: none; display: flex; background: var(--dark); border-bottom: 1px solid var(--line); }
.doc-tab { display: flex; align-items: center; gap: 11px; padding: 0 8px 0 9px; background: var(--panel); color: #fff; font-size: 11px; font-weight: 600; }
.view { flex: 1; min-height: 0; display: flex; }
.canvas { flex: 1; background: #606060; overflow: hidden; }
.art { display: block; }
.vscroll { width: 17px; display: flex; flex-direction: column; align-items: center; background: #4c4c4c; padding-bottom: 5px; }
.vscroll i { width: 15px; height: 26px; border-radius: 8px; background: #646464; margin: auto 0; }
.status { display: flex; align-items: center; height: 17px; flex: none; padding-top: 1px; color: var(--icon); background: #4e4e4e; }
.status .field, .status .drop { height: 15px; }
.status .drop { margin-right: 6px; }
.zoomf { width: 50px; margin-left: 3px; }
.pagef { width: 41px; margin-left: 11px; }
.status .page-drop { margin-right: 10px; }
.sel { margin-left: 86px; width: 126px; }
.hscroll { flex: 1; display: flex; align-items: center; justify-content: space-between; margin-left: 10px; padding-right: 23px; }
.hscroll i { width: 26px; height: 15px; border-radius: 8px; background: #646464; }

/* panels */
.tabs { display: flex; height: 27px; background: var(--dark); border-bottom: 1px solid var(--line); color: #aaa; font-weight: 600; }
.tabs button { gap: 5px; padding: 0 9px; }
.tabs .on { background: var(--panel); color: #fff; margin-bottom: -1px; }
.tab-end { display: flex; align-items: center; gap: 7px; margin-left: auto; padding-right: 7px; color: var(--icon); }
.tab-end i { width: 1px; height: 11px; background: #aaa; }
.panel { position: absolute; background: var(--panel); border: 1px solid var(--line); }
.align { left: 653px; top: 42px; width: 233px; border-radius: 3px 3px 0 0; }
.align .tabs { height: 26px; }
.panel-bar { height: 14px; display: flex; align-items: center; justify-content: flex-end; gap: 9px; padding-right: 4px; background: var(--dark); border-bottom: 1px solid var(--line); color: var(--icon); }
.align .tabs button { padding: 0 8px; }
.align .tabs .on { gap: 4px; padding: 0 7px 0 4px; }
.align .tabs .panel-menu { width: 19px; height: 14px; margin: auto 2px auto auto; padding: 0; border: 1px solid #333; color: var(--icon); }
.sect { height: 56px; padding: 6px 5px; border-bottom: 1px solid #414141; color: var(--icon); }
.sect h3 { font-size: 10px; line-height: 14px; font-weight: 600; }
.six { display: grid; grid-template-columns: 36px 36px 50px 36px 36px 18px; margin: 8px 0 0 4px; }
.sect.last { display: flex; justify-content: space-between; height: 55px; border: 0; }
.spacing { width: 161px; border-right: 1px solid #414141; }
.space-row { display: flex; gap: 13px; margin: 8px 0 0 3px; }
.zero { display: flex; gap: 4px; opacity: .25; }
.zero input { width: 55px; background: #6a6a6a; }
.to button { margin: 8px 0 0 6px; }
.six button, .space-row button { justify-content: flex-start; }

.popup { position: absolute; left: 882px; top: 62px; width: 197px; padding: 1px 3px 3px; background: linear-gradient(90deg, #f3f3f3 29px, #b8b8b8 29px 30px, #f3f3f3 30px); border: 1px solid #aaa; box-shadow: 2px 2px 2px #0008; color: #000; font-size: 11px; }
.popup button { position: relative; width: 100%; height: 22px; justify-content: flex-start; padding-left: 31px; }
.popup hr { height: 1px; margin: 1px 0 2px 28px; border: 0; background: #bbb; }
.popup button:disabled { color: #6f6f6f; }
.check { position: absolute; left: -1px; top: 0; width: 22px; height: 22px; display: grid; place-items: center; background: #d5eafb; border: 1px solid #3579b4; }

.color { right: 0; top: 10px; width: 242px; border-top-width: 3px; }
.color .on { padding: 0 9px 0 5px; }
.color-body { height: 151px; padding: 9px 16px 6px 6px; }
.trio { display: flex; width: 40px; height: 14px; border: 1px solid #222; }
.trio i { flex: 1; }
.blk { background: #000; }
.wht { background: #fff; }
.spectrum { height: 112px; margin-top: 10px; border: 1px solid #222; background: linear-gradient(#fff, #fff9 20%, #fff0 55%, #0000 55%, #000 98%), linear-gradient(90deg, #ed1c24, #fff200 17%, #6cc83c 32%, #4cc070 42%, #6cc8f4 53%, #4450a8 65%, #7a3a98 77%, #d81890 87%, #ed1c24); }
.color-foot { height: 8px; border-top: 1px solid var(--line); }
.color-foot .grip { margin-top: 2px; margin-bottom: 0; }

.dock { width: 40px; flex: none; border-right: 3px solid var(--line); background: var(--panel); color: var(--icon); }
.dock .strip { justify-content: flex-end; }
.dock-group { display: flex; flex-direction: column; align-items: center; border-bottom: 1px solid var(--line); padding-bottom: 2px; }
.dock-group .grip { margin: 3px 0; }
.dock-group button { width: 28px; height: 28px; }
.dock-group .on { height: 22px; margin: 3px 0; background: #343434; }
.dock-group svg { width: 18px; height: 18px; }

.libs { width: 240px; flex: none; display: flex; flex-direction: column; }
.end { justify-content: flex-end; }
.libs .tabs { height: 28px; flex: none; }
.lib-top { padding: 6px 0 0; border-bottom: 1px solid var(--line); }
.lib-row { display: flex; align-items: center; gap: 3px; padding: 0 11px 0 9px; }
.lib-row button { width: 22px; height: 22px; color: #ddd; }
.lib-row .on { background: #303030; }
.lib-row .pick { margin-right: 6px; }
.pick { position: relative; flex: 1; display: flex; align-items: center; height: 19px; background: #494949; border: 1px solid #5d5d5d; font-size: 11px; color: #fff; }
.pick select { appearance: none; flex: 1; padding-left: 9px; }
.pick svg { position: absolute; right: 4px; pointer-events: none; }
.lib-search { display: flex; align-items: center; gap: 6px; height: 34px; padding: 0 12px 0 7px; color: var(--icon); font-size: 11px; }
.lib-search input::placeholder { color: #7b7b7b; opacity: 1; }
.lib-body { flex: 1; background: #4c4d4d; display: flex; flex-direction: column; align-items: center; justify-content: center; text-align: center; border-bottom: 1px solid #444; padding-right: 16px; font-family: "Noto Sans", sans-serif; }
.lib-body h2 { margin-top: 17px; font-size: 13px; line-height: 20px; font-weight: 400; color: #e5e5e5; }
.lib-body p { margin-top: 10px; font-size: 10px; line-height: 15px; color: #a8a8a8; }
.help { width: 17px; height: 17px; margin-top: 10px; border: 2px solid #a8a8a8; border-radius: 50%; color: #a8a8a8; font-weight: 700; }
.lib-foot { height: 25px; display: flex; align-items: center; justify-content: space-between; padding: 0 23px 0 10px; color: #ddd; }
.lib-foot span { display: flex; gap: 9px; }
.trash { color: #999; }

/* taskbar */
.taskbar { height: 40px; flex: none; display: flex; background: #0a0e05; color: #fff; }
.start { width: 48px; }
.cortana { width: 344px; display: flex; align-items: center; gap: 9px; padding: 0 14px 0 9px; background: #333136; }
.cortana input { flex: 1; font-size: 14px; }
.cortana input::placeholder { color: #aeaeae; opacity: 1; }
.apps { display: flex; }
.apps button { position: relative; width: 49px; height: 40px; }
.run::after { content: ""; position: absolute; left: 4px; right: 4px; bottom: 0; height: 2px; background: #76b9ed; }
.current { background: #3d3f38; }
.current::after { left: 0; right: 0; }
.tile { width: 20px; height: 20px; display: grid; place-items: center; border: 1px solid; font-size: 12px; line-height: 12px; font-weight: 600; }
.fs { background: #2b1a08; color: #f90; }
.pdf { background: #24080a; color: #e1251b; }
.lr { background: #0a2230; color: #a5cfe0; }
.fe { background: #e2e8f8; color: #2d4f9e; }
.sc { background: #261b30; color: #b9a4cc; }
.ccl { background: #d4111b; border-color: #d4111b; color: #fff; }
.ai { background: #261300; color: #ff7c00; }
.count { position: absolute; display: grid; place-items: center; width: 20px; height: 20px; border-radius: 50%; background: #3a3a3a; border: 1px solid #888; color: #fff; font-size: 11px; font-weight: 600; }
.apps .count { left: 28px; top: 16px; }
.tray { display: flex; align-items: center; gap: 10px; margin-left: auto; padding-right: 24px; }
.tray time { width: 50px; margin-right: 9px; font-size: 11px; line-height: 18px; text-align: center; }
.notes { position: relative; }
.notes .count { left: 7px; top: 5px; }
```
